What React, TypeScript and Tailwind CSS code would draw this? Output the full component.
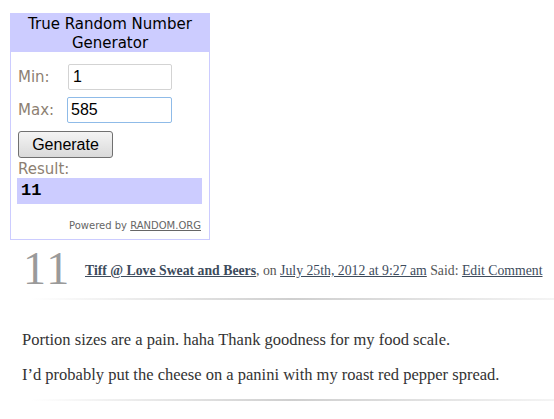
import React from 'react'

const verdana = "font-['DejaVu_Sans',Verdana,sans-serif]"
const serif = "font-['Liberation_Serif','Times_New_Roman',serif]"

function Rule() {
    return <div className="ml-[30px] h-[2px] bg-gradient-to-r from-white via-[#cfcfcf] to-[#f4f4f4]" />
}

export default function App() {
    return (
        <div className="w-[554px] h-[419px] bg-white overflow-hidden">
            {/* RANDOM.ORG widget */}
            <div className="ml-[10px] mt-[13px] w-[200px] h-[227px] border border-[#ccccff] flex flex-col">
                <div className={`${verdana} bg-[#ccccff] h-[38px] text-center text-[15px] leading-[19px] pt-[1px] text-black`}>
                    True Random Number
                    <br />
                    Generator
                </div>
                <div className="flex flex-col px-[7px] pt-[12px]">
                    <div className="flex items-center h-[26px]">
                        <span className={`${verdana} w-[50px] text-[15px] text-[#8d7f72]`}>Min:</span>
                        <div className="w-[104px] h-[26px] border border-[#d3d3d3] rounded-[2px] px-[4px] flex items-center font-['Liberation_Sans',Arial,sans-serif] text-[16px] text-black">
                            1
                        </div>
                    </div>
                    <div className="flex items-center h-[26px] mt-[7px]">
                        <span className={`${verdana} w-[49px] text-[15px] text-[#8d7f72]`}>Max:</span>
                        <div className="w-[105px] h-[26px] border border-[#8fbbe8] rounded-[2px] px-[3px] flex items-center font-['Liberation_Sans',Arial,sans-serif] text-[16px] text-black">
                            585
                        </div>
                    </div>
                    <div className="mt-[8px] w-[95px] h-[27px] border border-[#707070] rounded-[3px] bg-gradient-to-b from-[#f4f4f4] to-[#dadada] flex items-center justify-center font-['Liberation_Sans',Arial,sans-serif] text-[16px] text-black">
                        Generate
                    </div>
                    <div className={`${verdana} text-[15px] leading-[18px] mt-[2px] text-[#8d7f72]`}>Result:</div>
                    <div className="-ml-[1px] w-[185px] h-[26px] bg-[#ccccff] flex items-center px-[4px] font-['Liberation_Mono','Courier_New',monospace] font-bold text-[17px] text-black">
                        11
                    </div>
                    <div className={`${verdana} text-right text-[10px] mt-[14px] pr-[1px] text-[#666]`}>
                        Powered by <span className="underline">RANDOM.ORG</span>
                    </div>
                </div>
            </div>

            {/* Comment */}
            <div className={`${serif} mt-[6px]`}>
                <div className="flex items-center h-[46px]">
                    <span className="ml-[23px] w-[62px] text-[46px] leading-[46px] text-[#9a9a9a] tracking-[2px]">11</span>
                    <p className="text-[13.75px] leading-[16px] text-[#555] pt-[4px]">
                        <a className="font-bold underline text-[#3d4b5c]">Tiff @ Love Sweat and Beers</a>, on{' '}
                        <a className="underline text-[#3d4b5c]">July 25th, 2012 at 9:27 am</a> Said:{' '}
                        <a className="underline text-[#3d4b5c]">Edit Comment</a>
                    </p>
                </div>
                <div className="mt-[6px]">
                    <Rule />
                </div>
                <div className="px-[22px] pt-[30px] pb-[14px] text-[16.5px] leading-[20px] text-[#333] flex flex-col gap-[15px]">
                    <p>Portion sizes are a pain. haha Thank goodness for my food scale.</p>
                    <p>I’d probably put the cheese on a panini with my roast red pepper spread.</p>
                </div>
                <Rule />
            </div>
        </div>
    )
}
